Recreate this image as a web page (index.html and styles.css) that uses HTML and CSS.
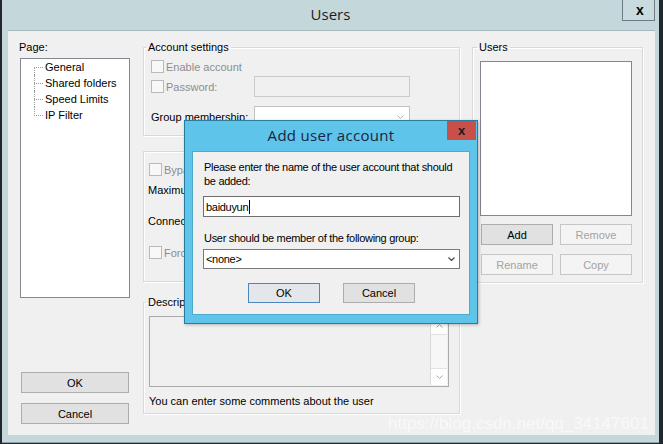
FILE: index.html
```html
<!DOCTYPE html>
<html>
<head>
  <meta charset="UTF-8">
  <title>Users</title>
  <link rel="stylesheet" href="styles.css">
</head>
<body>
<div class="window">
  <div class="titlebar">
    <span class="title">Users</span>
    <button class="btn-close">x</button>
  </div>

  <div class="client">
    <div class="col col-page">
      <div class="lbl">Page:</div>
      <ul class="tree">
        <li>General</li>
        <li>Shared folders</li>
        <li>Speed Limits</li>
        <li>IP Filter</li>
      </ul>
      <button class="btn btn-wide btn-ok">OK</button>
      <button class="btn btn-wide btn-cancel">Cancel</button>
    </div>

    <div class="col col-main">
      <fieldset class="group group-account">
        <legend>Account settings</legend>
        <div class="row row-first">
          <span class="check"></span><span class="dis">Enable account</span>
        </div>
        <div class="row row-pass">
          <span class="row-lbl"><span class="check"></span><span class="dis">Password:</span></span>
          <span class="field field-dis"></span>
        </div>
        <div class="row row-member">
          <span class="row-lbl">Group membership:</span>
          <span class="field combo">
            <svg width="7" height="4" viewBox="0 0 7 4"><path d="M0.5 0.5 L3.5 3.5 L6.5 0.5" fill="none" stroke="#b4b4b4"/></svg>
          </span>
        </div>
      </fieldset>

      <fieldset class="group group-limits">
        <div class="row row-bypass">
          <span class="check"></span><span class="dis">Bypass server userlimit</span>
        </div>
        <div class="line line-max">Maximum user count:</div>
        <div class="line line-conn">Connection limit per IP:</div>
        <div class="row row-force">
          <span class="check"></span><span class="dis">Force SSL for user login</span>
        </div>
      </fieldset>

      <fieldset class="group group-desc">
        <legend>Description</legend>
        <div class="memo">
          <div class="memo-text"></div>
          <div class="vscroll">
            <span class="arrow"><svg width="7" height="4" viewBox="0 0 7 4"><path d="M0.5 3.5 L3.5 0.5 L6.5 3.5" fill="none" stroke="#a8a8a8"/></svg></span>
            <span class="track"></span>
            <span class="arrow"><svg width="7" height="4" viewBox="0 0 7 4"><path d="M0.5 0.5 L3.5 3.5 L6.5 0.5" fill="none" stroke="#a8a8a8"/></svg></span>
          </div>
        </div>
        <div class="hint">You can enter some comments about the user</div>
      </fieldset>
    </div>

    <div class="col col-users">
      <fieldset class="group group-users">
        <legend>Users</legend>
        <div class="listbox"></div>
        <div class="user-btns">
          <button class="btn">Add</button>
          <button class="btn btn-dis">Remove</button>
          <button class="btn btn-dis">Rename</button>
          <button class="btn btn-dis">Copy</button>
        </div>
      </fieldset>
    </div>
  </div>
</div>

<div class="dialog">
  <div class="dlg-title">
    <span class="title">Add user account</span>
    <button class="dlg-close">x</button>
  </div>
  <div class="dlg-client">
    <p class="dlg-text">Please enter the name of the user account that should<br>be added:</p>
    <div class="dlg-input">baiduyun<span class="caret"></span></div>
    <p class="dlg-text dlg-text-group">User should be member of the following group:</p>
    <div class="dlg-select">
      <span>&lt;none&gt;</span>
      <svg width="7" height="4" viewBox="0 0 7 4"><path d="M0.5 0.5 L3.5 3.5 L6.5 0.5" fill="none" stroke="#505050" stroke-width="1.3"/></svg>
    </div>
    <div class="dlg-btns">
      <button class="btn btn-default">OK</button>
      <button class="btn">Cancel</button>
    </div>
  </div>
</div>

<div class="watermark">https://blog.csdn.net/qq_34147601</div>
</body>
</html>
```

FILE: styles.css
```css
* {box-sizing: border-box;}
html, body {margin: 0;}
body {
	position: relative;
	width: 663px;
	height: 444px;
	overflow: hidden;
	background: #1f282d;
	font-family: "Liberation Sans", Arial, sans-serif;
	font-size: 11px;
	color: #000;
}
button {font-family: inherit; font-size: 11px; color: inherit; padding: 0;}

/* main window */
.window {
	margin-left: 2px;
	width: 657px;
	height: 443px;
	background: #c4d8dc;
	border-bottom: 1px solid #8ea2a8;
	display: flex;
	flex-direction: column;
}
.titlebar {
	height: 30px;
	display: grid;
	grid-template-columns: 1fr auto 1fr;
	align-items: center;
}
.title {
	grid-column: 2;
	font-family: "Open Sans", "Noto Sans", sans-serif;
	font-size: 15px;
	color: #1c1c1c;
	padding-bottom: 2px;
}
.btn-close {
	grid-column: 3;
	justify-self: end;
	align-self: start;
	width: 33px;
	height: 21px;
	margin-right: 4px;
	border: 1px solid #6e7d83;
	border-top: 0;
	background: #c9dbdf;
	font-weight: bold;
	font-size: 14px;
	line-height: 16px;
	padding-left: 3px;
}

.client {
	margin: 0 4px 0 6px;
	height: 405px;
	background: #f0f0f0;
	border-top: 1px solid #a9b9be;
	padding: 9px 12px 0;
	display: grid;
	grid-template-columns: 111px 317px 171px;
	column-gap: 12px;
	align-items: start;
}
.col {display: flex; flex-direction: column;}

/* page tree */
.lbl {line-height: 14px; margin-left: -1px;}
.tree {
	list-style: none;
	margin: 4px 0 0;
	padding: 0 0 0 13px;
	width: 110px;
	height: 240px;
	background: #fff;
	border: 1px solid #828790;
}
.tree li {
	position: relative;
	height: 16px;
	line-height: 16px;
	padding-left: 11px;
	white-space: nowrap;
}
.tree li:before {
	content: "";
	position: absolute;
	left: 0;
	top: 8px;
	width: 9px;
	border-top: 1px dotted #9a9a9a;
}
.tree li:after {
	content: "";
	position: absolute;
	left: 0;
	top: 0;
	height: 16px;
	border-left: 1px dotted #9a9a9a;
}
.tree li:first-child:after {top: 8px; height: 8px;}
.tree li:last-child:after {height: 9px;}

.btn {
	height: 21px;
	background: #e1e1e1;
	border: 1px solid #adadad;
	text-align: center;
}
.btn-wide {width: 108px; margin-left: 1px;}
.btn-ok {margin-top: 74px;}
.btn-cancel {margin-top: 10px;}
.btn-dis {background: #f4f4f4; border-color: #c6c6c6; color: #a3a3a3;}

/* group boxes */
.group {
	margin: 0;
	padding: 0;
	min-width: 0;
	border: 1px solid #d9d9d9;
	box-shadow: 1px 1px 0 #fff, inset 1px 1px 0 #fff;
}
.group legend {
	padding: 0 2px;
	line-height: 14px;
}
.row {display: flex; align-items: center;}
.check {
	width: 13px;
	height: 13px;
	flex: none;
	border: 1px solid #bababa;
	background: #f8f8f8;
	margin-right: 2px;
}
.dis {color: #8d8d8d; white-space: nowrap;}
.row-lbl {width: 103px; display: flex; align-items: center; white-space: nowrap;}

.group-account {padding: 6px 0 8px 7px;}
.group-account legend {margin-left: -5px;}
.row-first {height: 13px;}
.row-pass {margin-top: 3px;}
.row-member {margin-top: 9px;}
.field {width: 156px; height: 21px;}
.field-dis {background: #f0f0f0; border: 1px solid #cbcbcb;}
.combo {
	background: #fff;
	border: 1px solid #c4c4c4;
	display: flex;
	align-items: center;
	justify-content: flex-end;
	padding-right: 5px;
}

.group-limits {margin-top: 15px; padding: 11px 0 22px 5px;}
.row-bypass, .row-force {height: 13px;}
.line {line-height: 14px; margin-left: -1px; white-space: nowrap;}
.line-max {margin-top: 7px;}
.line-conn {margin-top: 17px;}
.row-force {margin-top: 18px;}

.group-desc {margin-top: 13px; padding: 7px 0 5px 5px;}
.group-desc legend {margin-left: -3px;}
.memo {
	width: 300px;
	height: 71px;
	border: 1px solid #ababab;
	background: #f0f0f0;
	display: flex;
}
.memo-text {flex: 1;}
.vscroll {
	width: 17px;
	margin: 1px 1px 1px 0;
	border-left: 1px solid #dadada;
	background: #f7f7f7;
	display: flex;
	flex-direction: column;
}
.vscroll .arrow {height: 16px; display: flex; align-items: center; justify-content: center; background: #fff;}
.vscroll .track {flex: 1; border-top: 1px solid #e2e2e2; border-bottom: 1px solid #e2e2e2;}
.hint {margin-top: 7px; line-height: 14px; white-space: nowrap;}

/* users list */
.group-users {padding: 7px 0 7px 7px;}
.group-users legend {margin-left: -3px;}
.listbox {
	width: 152px;
	height: 155px;
	background: #fff;
	border: 1px solid #828790;
}
.user-btns {
	margin: 8px 0 0 1px;
	display: grid;
	grid-template-columns: 72px 72px;
	column-gap: 7px;
	row-gap: 9px;
}

/* add user dialog */
.dialog {
	position: absolute;
	left: 184px;
	top: 120px;
	width: 294px;
	height: 204px;
	background: #5ec4e9;
	border: 1px solid #2b7c9c;
	display: flex;
	flex-direction: column;
	box-shadow: 1px 1px 3px rgba(0,0,0,0.25);
}
.dlg-title {
	height: 30px;
	display: grid;
	grid-template-columns: 1fr auto 1fr;
	align-items: center;
}
.dlg-title .title {color: #1a2540; letter-spacing: 0.3px;}
.dlg-close {
	grid-column: 3;
	justify-self: end;
	align-self: start;
	width: 29px;
	height: 19px;
	margin-right: 1px;
	border: 0;
	background: #c9504a;
	color: #1a1a1a;
	font-weight: bold;
	font-size: 13px;
	line-height: 17px;
}
.dlg-client {
	margin: 0 7px;
	height: 164px;
	background: #f0f0f0;
	border: 1px solid #4ea9ca;
	padding: 8px 9px 0 10px;
	letter-spacing: -0.3px;
}
.dlg-text {margin: 0 0 0 1px; line-height: 14px; white-space: nowrap;}
.dlg-text-group {margin-top: 14px;}
.dlg-input {
	margin-top: 8px;
	width: 257px;
	height: 21px;
	background: #fff;
	border: 1px solid #6e6e6e;
	padding-left: 2px;
	display: flex;
	align-items: center;
}
.caret {width: 1px; height: 14px; background: #000; margin-left: 1px;}
.dlg-select {
	margin-top: 4px;
	width: 257px;
	height: 20px;
	background: #fff;
	border: 1px solid #7a7a7a;
	padding: 0 4px 0 2px;
	display: flex;
	align-items: center;
	justify-content: space-between;
}
.dlg-btns {
	margin-top: 14px;
	display: flex;
	justify-content: center;
	gap: 23px;
	letter-spacing: 0;
}
.dlg-btns .btn {width: 72px; height: 20px;}
.btn-default {border-color: #4d86bb; background: #e3e6ea;}

.watermark {
	position: absolute;
	left: 388px;
	top: 414px;
	font-size: 17px;
	color: rgba(255,255,255,0.6);
	white-space: nowrap;
}
```
